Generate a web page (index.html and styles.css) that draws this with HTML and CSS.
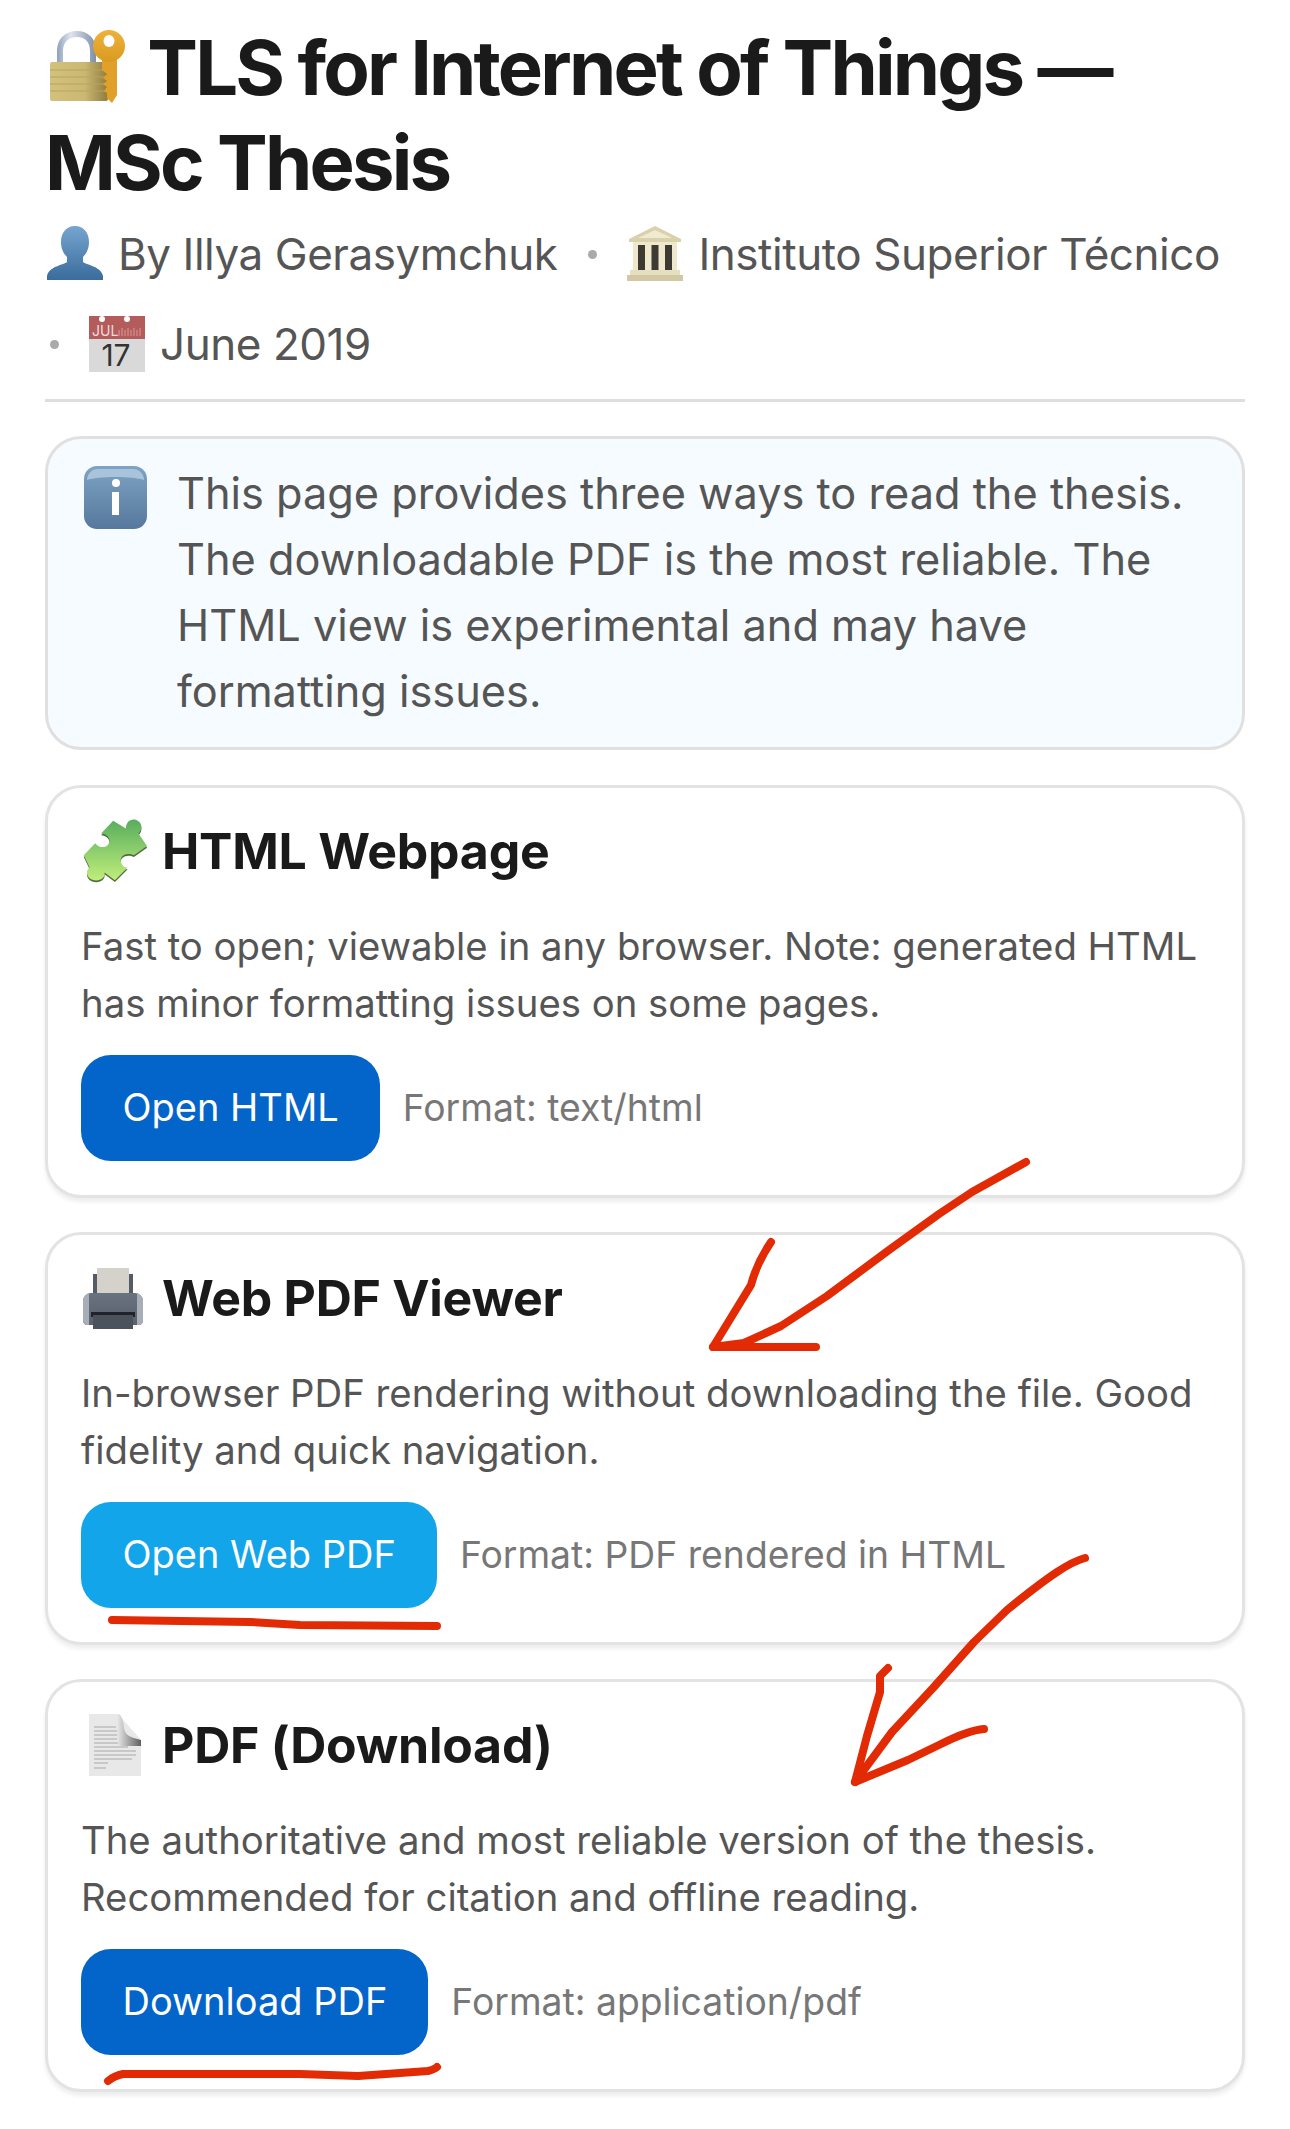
FILE: index.html
```html
<!DOCTYPE html>
<html lang="en">
<head>
<meta charset="utf-8">
<title>TLS for Internet of Things — MSc Thesis</title>
<link rel="stylesheet" href="styles.css">
</head>
<body>
<main class="page">
  <header class="head">
    <h1 class="title">
      <svg class="emoji emoji-lock" viewBox="0 0 76 74" aria-hidden="true">
        <defs>
          <linearGradient id="lockBody" x1="0" x2="1" y1="0" y2="0"><stop offset="0" stop-color="#d3c27c"/><stop offset=".6" stop-color="#cbb872"/><stop offset="1" stop-color="#8f7b3e"/></linearGradient>
          <linearGradient id="shackle" x1="0" x2="1" y1="0" y2="0"><stop offset="0" stop-color="#8ea0bc"/><stop offset=".35" stop-color="#dfe5ee"/><stop offset="1" stop-color="#7d8ea8"/></linearGradient>
          <linearGradient id="keyGold" x1="0" x2="0" y1="0" y2="1"><stop offset="0" stop-color="#efb239"/><stop offset="1" stop-color="#d99a22"/></linearGradient>
        </defs>
        <path d="M8 34V22C8 9 17 2 28 2s19 7 19 20v12h-6V22c0-9-5-14-13-14S14 13 14 22v12z" fill="url(#shackle)"/>
        <rect x="1" y="33" width="58" height="39" rx="2" fill="url(#lockBody)"/>
        <path d="M1 41h58M1 48h58M1 55h58M1 62h58" stroke="#b7a45f" stroke-width="1.2"/>
        <path d="M53 30h15v36l-5 8-5-5v-5l-3-2 3-4-4-3 4-3-4-3 4-4-5-4z" fill="#e0a02a"/>
        <circle cx="60" cy="17" r="16" fill="url(#keyGold)"/>
        <ellipse cx="60" cy="12" rx="5.500" ry="6" fill="#fff"/>
      </svg>
      TLS for Internet of Things — MSc Thesis
    </h1>
    <div class="meta">
      <span class="meta-item">
        <svg class="emoji" viewBox="0 0 56 56" aria-hidden="true">
          <defs><linearGradient id="person" x1="0" x2="0" y1="0" y2="1"><stop offset="0" stop-color="#76a5cf"/><stop offset="1" stop-color="#3a6c9c"/></linearGradient></defs>
          <path d="M28 0c9 0 14 7 14 16 0 7-3 12-6 15v5c3 3 18 4 20 14v4H0v-4c2-10 17-11 20-14v-5c-3-3-6-8-6-15C14 7 19 0 28 0z" fill="url(#person)"/>
        </svg>
        By Illya Gerasymchuk
      </span>
      <span class="dot"></span>
      <span class="meta-item">
        <svg class="emoji" viewBox="0 0 56 56" aria-hidden="true">
          <path d="M28 0 54 13v3H2v-3z" fill="#d9d0ac"/>
          <path d="M28 4 45 12H11z" fill="#f0ead0"/>
          <rect x="6" y="16" width="44" height="28" fill="#efe8cd"/>
          <path d="M11 19h7v25h-7zM24.500 19h7v25h-7zM38 19h7v25h-7z" fill="#3d3a33"/>
          <rect x="3" y="44" width="50" height="5" fill="#e6dfbf"/>
          <rect x="0" y="49" width="56" height="6" fill="#d2c9a4"/>
        </svg>
        Instituto Superior Técnico
      </span>
      <span class="dot"></span>
      <span class="meta-item">
        <svg class="emoji" viewBox="0 0 56 56" aria-hidden="true">
          <rect x="0" y="0" width="56" height="23" fill="#b45c5c"/>
          <rect x="0" y="23" width="56" height="33" fill="#d9d9d9"/>
          <circle cx="13" cy="3" r="3" fill="#fff"/><circle cx="38" cy="3" r="3" fill="#fff"/>
          <text x="3" y="20" class="cal-month">JUL</text>
          <path d="M30 20V14M33 20V12M36 20V14M39 20V12M42 20V14M45 20V12M48 20V14M51 20V12" stroke="#d99a9a" stroke-width="1"/>
          <text x="27" y="50" class="cal-day">17</text>
        </svg>
        June 2019
      </span>
    </div>
  </header>

  <div class="callout">
    <svg class="emoji emoji-info" viewBox="0 0 63 63" aria-hidden="true">
      <defs><linearGradient id="info" x1="0" x2="0" y1="0" y2="1"><stop offset="0" stop-color="#7fa3c4"/><stop offset="1" stop-color="#55789c"/></linearGradient></defs>
      <rect width="63" height="63" rx="13" fill="url(#info)"/>
      <path d="M3 14a11 11 0 0 1 11-11h35a11 11 0 0 1 11 11c-10-4-47-4-57 0z" fill="#a9c3da"/>
      <circle cx="32" cy="17" r="4" fill="#fff"/>
      <path d="M28 26h7v23h-7z" fill="#fff"/>
    </svg>
    <p class="callout-text">This page provides three ways to read the thesis. The downloadable PDF is the most reliable. The HTML view is experimental and may have formatting issues.</p>
  </div>

  <section class="card">
    <h2 class="card-title">
      <svg class="emoji emoji-card" viewBox="37 30 185 185" aria-hidden="true">
        <defs><linearGradient id="puzzle" x1="0" x2="0" y1="0" y2="1"><stop offset="0" stop-color="#58ad5e"/><stop offset="1" stop-color="#c0ee7a"/></linearGradient></defs>
        <path class="puzzle-edge" d="M130 35 168 58C165 40 180 28 195 32 213 37 218 58 203 72L228 108 190 135C170 125 150 135 152 152 154 165 165 172 172 170L135 207 105 185C108 205 85 212 68 205 52 198 50 178 62 170L45 135 78 100C90 115 110 115 118 100 124 88 112 72 95 72Z"/>
        <path d="M130 35 168 58C165 40 180 28 195 32 213 37 218 58 203 72L228 108 190 135C170 125 150 135 152 152 154 165 165 172 172 170L135 207 105 185C108 205 85 212 68 205 52 198 50 178 62 170L45 135 78 100C90 115 110 115 118 100 124 88 112 72 95 72Z" fill="url(#puzzle)"/>
      </svg>
      HTML Webpage
    </h2>
    <p class="card-text">Fast to open; viewable in any browser. Note: generated HTML has minor formatting issues on some pages.</p>
    <div class="actions">
      <a class="btn" href="#">Open HTML</a>
      <span class="format">Format: text/html</span>
    </div>
  </section>

  <section class="card">
    <h2 class="card-title">
      <svg class="emoji emoji-card" viewBox="0 0 64 64" aria-hidden="true">
        <defs><linearGradient id="printer" x1="0" x2="0" y1="0" y2="1"><stop offset="0" stop-color="#69727f"/><stop offset="1" stop-color="#59616d"/></linearGradient></defs>
        <rect x="12" y="8" width="40" height="22" fill="#555c68"/>
        <rect x="16" y="2" width="32" height="26" fill="#d5d1cb"/>
        <path d="M10 27h44c4 0 7 3 8 7v21c0 2-2 4-4 4H6c-2 0-4-2-4-4V34c1-4 4-7 8-7z" fill="url(#printer)"/>
        <path d="M2 34c1-4 3-6 6-7v32H6c-2 0-4-2-4-4zM62 34c-1-4-3-6-6-7v32h2c2 0 4-2 4-4z" fill="#a7aeb7"/>
        <rect x="10" y="46" width="44" height="5" fill="#1f2329"/>
        <rect x="12" y="49" width="40" height="14" fill="#4b525c"/>
      </svg>
      Web PDF Viewer
    </h2>
    <p class="card-text">In-browser PDF rendering without downloading the file. Good fidelity and quick navigation.</p>
    <div class="actions">
      <a class="btn btn-sky" href="#">Open Web PDF</a>
      <span class="format">Format: PDF rendered in HTML</span>
    </div>
  </section>

  <section class="card">
    <h2 class="card-title">
      <svg class="emoji emoji-card" viewBox="0 0 64 64" aria-hidden="true">
        <defs><linearGradient id="fold" x1="0" x2="1" y1="0" y2="0"><stop offset="0" stop-color="#e9e9e9"/><stop offset="1" stop-color="#5f5f5f"/></linearGradient></defs>
        <path d="M8 1h29l23 26v36H8z" fill="#e8e8e8"/>
        <path d="M13 14h22M13 18h24M13 22h24M13 26h26M13 30h28M13 34h34M13 38h42M13 42h42M13 46h38M13 50h14M13 55h12" stroke="#bdbdbd" stroke-width="1.4"/>
        <path d="M37 1c3 0 5 5 6 14 1 6 4 9 17 12v6H41c-3 0-5-3-5-8z" fill="url(#fold)"/>
      </svg>
      PDF (Download)
    </h2>
    <p class="card-text">The authoritative and most reliable version of the thesis. Recommended for citation and offline reading.</p>
    <div class="actions">
      <a class="btn" href="#">Download PDF</a>
      <span class="format">Format: application/pdf</span>
    </div>
  </section>
</main>

<svg class="scribbles" viewBox="0 0 1290 2129" aria-hidden="true">
  <g class="ink">
    <path d="M1026 1162 972 1192 939 1214 889 1250 827 1296 781 1326 744 1343 713 1347"/>
    <path d="M771 1242C760 1258 755 1270 751 1285L713 1347H816"/>
    <path d="M1085 1558C1070 1562 1050 1575 1007 1610L974 1642 933 1688 892 1732 855 1782"/>
    <path d="M888 1668 880 1676 880 1692 867 1736 855 1782 908 1760 941 1744C955 1737 970 1730 984 1729"/>
    <path d="M112 1620 250 1622 300 1625 437 1626"/>
    <path d="M108 2081C114 2076 118 2075 123 2074H300L358 2076 428 2071C432 2070 435 2069 437 2067"/>
  </g>
</svg>
</body>
</html>
```

FILE: styles.css
```css
* { box-sizing: border-box; }

html, body { margin: 0; padding: 0; background: #fff; }

body {
  font-family: Inter, "Liberation Sans", sans-serif;
  color: #1a1a1a;
  position: relative;
  height: 2129px;
  overflow: hidden;
}

.page { padding: 20px 45px 0; }

.emoji {
  width: 56px;
  height: 56px;
  flex: none;
  display: block;
  overflow: visible;
}

.title {
  margin: 0;
  font-size: 76px;
  line-height: 95px;
  font-weight: 700;
  letter-spacing: -2.8px;
  color: #1a1a1a;
}

.emoji-lock {
  display: inline-block;
  width: 76px;
  height: 74px;
  margin: 0 7px -8px 4px;
}

.meta {
  display: flex;
  flex-wrap: wrap;
  align-items: center;
  column-gap: 28px;
  height: 193px;
  margin-top: -1px;
  padding: 0 0 12px 2px;
  border-bottom: 3px solid #dedede;
  font-size: 44px;
  line-height: 90px;
  letter-spacing: -0.45px;
  color: #555;
}

.meta-item {
  display: flex;
  align-items: center;
  gap: 15px;
  white-space: nowrap;
}

.dot {
  width: 9px;
  height: 9px;
  margin: 0 2px 0 3px;
  border-radius: 50%;
  background: #aaa;
}

.cal-month {
  font: 14px Inter, "Liberation Sans", sans-serif;
  fill: #f2dcdc;
  letter-spacing: 0;
}

.cal-day {
  font: 30px Inter, "Liberation Sans", sans-serif;
  fill: #333;
  text-anchor: middle;
  letter-spacing: 0;
}

.callout {
  display: flex;
  align-items: flex-start;
  gap: 30px;
  height: 314px;
  margin-top: 34px;
  padding: 25px 36px 0;
  background: #f5fbff;
  border: 3px solid #e0e0e0;
  border-radius: 36px;
}

.emoji-info {
  width: 63px;
  height: 63px;
  margin-top: 2px;
}

.callout-text {
  margin: -4px 0 0;
  font-size: 43.300px;
  line-height: 66px;
  color: #555;
}

.card {
  height: 413px;
  margin-top: 35px;
  padding: 31px 33px 0;
  background: #fff;
  border: 3px solid #e3e3e3;
  border-radius: 36px;
  box-shadow: 0 4px 4px rgba(0, 0, 0, 0.07);
}

.card + .card { margin-top: 34px; }

.card-title {
  display: flex;
  align-items: center;
  gap: 17px;
  margin: 0;
  font-size: 50px;
  line-height: 64px;
  font-weight: 700;
  letter-spacing: -0.25px;
  color: #1a1a1a;
}

.emoji-card {
  width: 64px;
  height: 64px;
}

.puzzle-edge {
  fill: #4f6b3b;
  transform: translate(0, 5px);
}

.card-text {
  margin: 35px 0 0;
  font-size: 38.300px;
  line-height: 57px;
  color: #555;
}

.actions {
  display: flex;
  align-items: center;
  gap: 23px;
  margin-top: 23px;
}

.btn {
  display: block;
  height: 106px;
  padding: 0 41px 0 41.500px;
  border-radius: 30px;
  background: #0364c9;
  color: #fff;
  font-size: 38px;
  line-height: 104px;
  text-decoration: none;
  white-space: nowrap;
}

.btn-sky { background: #12a5ea; }

.format {
  margin-bottom: 2px;
  font-size: 37.300px;
  color: #777;
  white-space: nowrap;
}

.scribbles {
  position: absolute;
  left: 0;
  top: 0;
  width: 1290px;
  height: 2129px;
  pointer-events: none;
}

.ink {
  fill: none;
  stroke: #e22a05;
  stroke-width: 8;
  stroke-linecap: round;
  stroke-linejoin: round;
}
```
